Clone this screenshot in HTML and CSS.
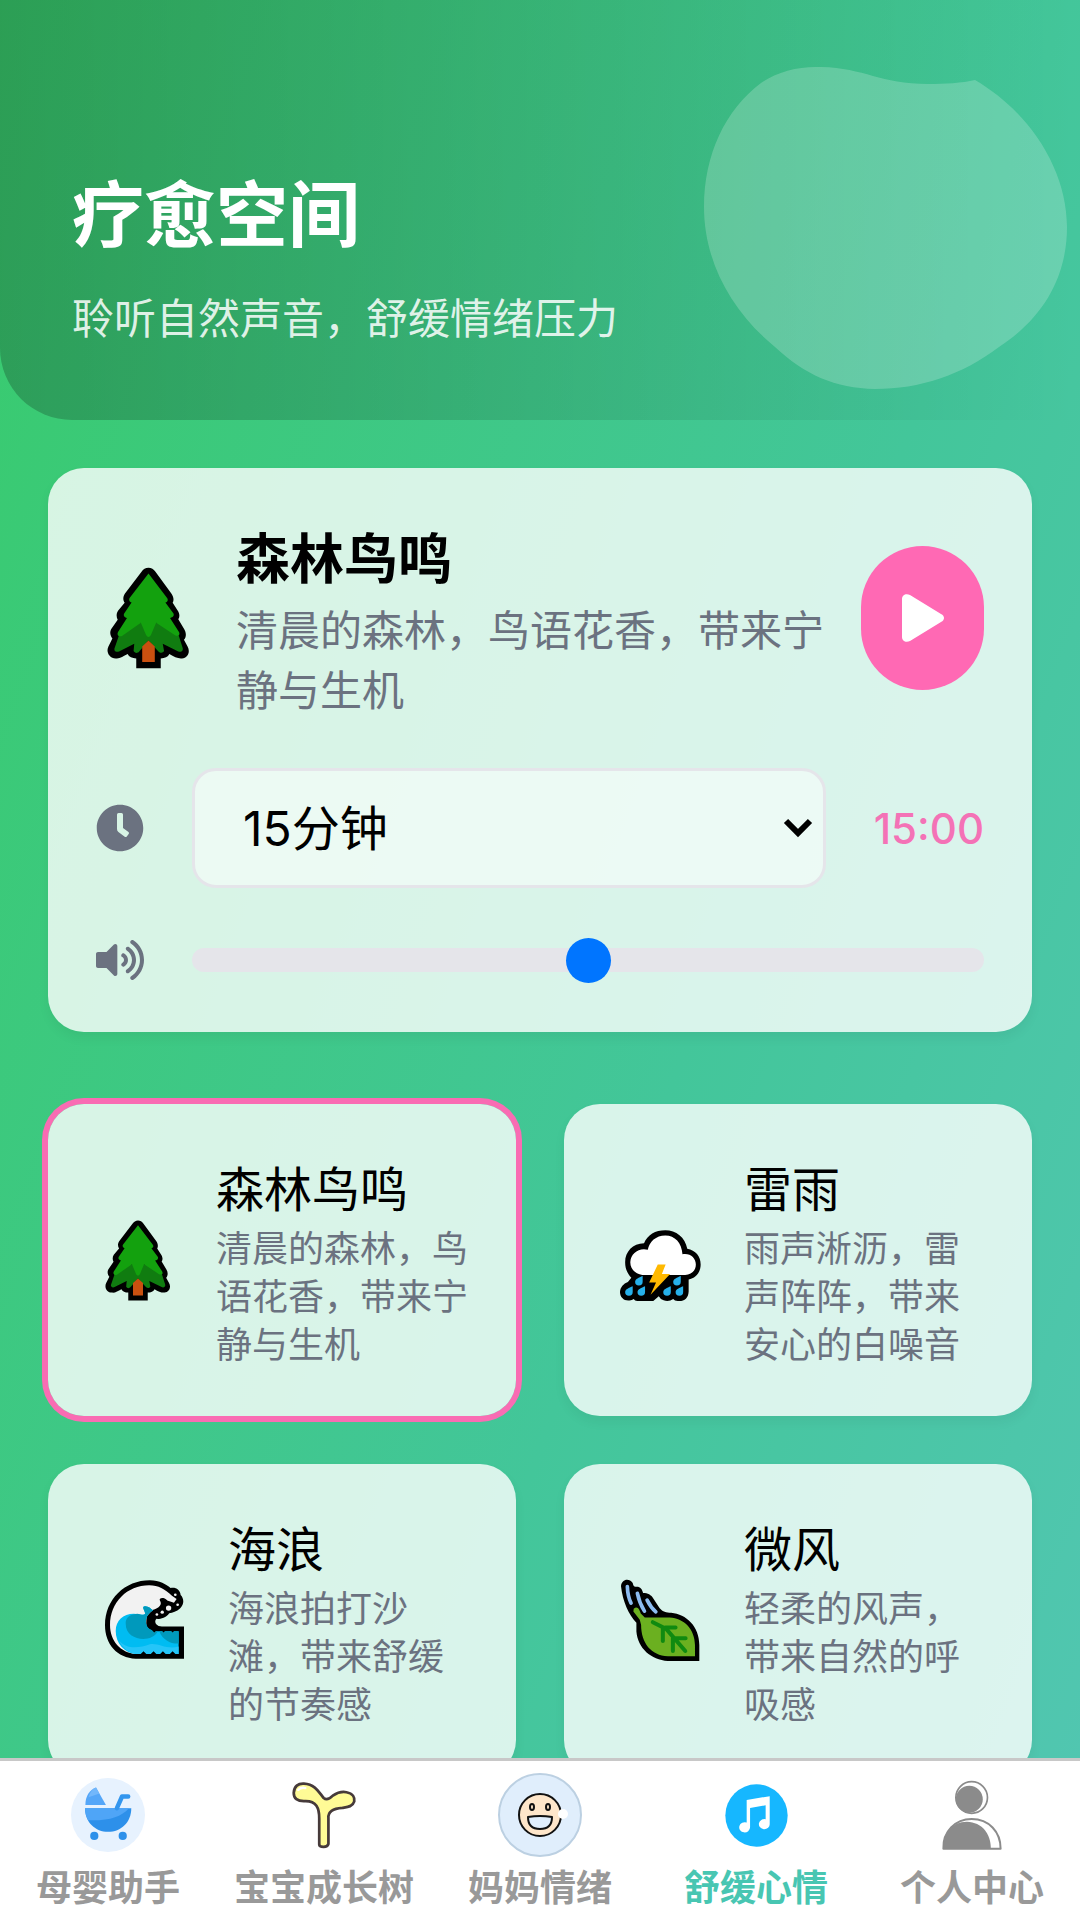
FILE: index.html
```html
<!DOCTYPE html>
<html lang="zh-CN">
<head>
  <meta charset="UTF-8">
  <title>疗愈空间</title>
  <meta name="viewport" content="width=device-width, initial-scale=1.0">
  <link rel="stylesheet" href="styles.css">
</head>
<body>
  <div class="app">
    <main class="page">
      <header class="header">
        <h1>疗愈空间</h1>
        <p>聆听自然声音，舒缓情绪压力</p>
        <svg class="blob" viewBox="0 0 370 340" aria-hidden="true">
          <path d="M4 147C4 95 25 50 61 23C78 11 100 6 121 7C165 8 180 24 228 24C245 24 262 23 275 20C330 52 367 110 367 167C367 215 345 257 299 287C262 315 220 329 175 329C135 328 105 315 75 287C30 250 4 200 4 147Z"/>
        </svg>
      </header>

      <!-- Shared emoji shapes -->
      <svg class="defs" aria-hidden="true">
        <symbol id="tree" viewBox="0 0 250 308">
          <path d="M125 2c-9 0-16 5-21 12L54 80c-6 8-7 20-1 28L33 132c-6 9-5 20-1 27L12 188c-5 10-2 20 4 28L4 240c-8 16 2 36 22 36C38 278 48 270 62 263C66 272 76 276 88 276V306H162V276C174 276 184 272 188 263C202 272 214 277 226 276C244 275 252 255 243 240L232 220C241 210 238 196 233 188L215 158C221 150 218 138 212 130L198 108C203 100 200 88 194 80L146 14C140 6 134 2 125 2Z"/>
          <path fill="#107c10" d="M90 168H160L216 206L228 244c3 9-5 15-13 11L168 232L172 254c-4 7-12 6-17 1L125 222L97 255c-5 6-13 6-17-1L82 232L36 255c-9 4-17-2-13-11L36 206Z"/>
          <path fill="#13a10e" d="M125 20L180 92c6 7 3 14-4 15L200 140c4 7-2 13-10 14L217 196c5 10-4 14-12 10L148 168L133 204c-4 10-12 10-16 0L102 168L45 208c-8 4-17-2-12-12L60 154c-8-1-12-8-8-14L74 107c-7-2-10-9-5-15Z"/>
          <path fill="#ca5010" d="M125 222L144 240V287H106V240Z"/>
        </symbol>
      </svg>

      <section class="player">
        <div class="player-top">
          <span class="player-icon"><svg width="83" height="102" aria-hidden="true"><use href="#tree"/></svg></span>
          <div class="player-text">
            <h2>森林鸟鸣</h2>
            <p>清晨的森林，鸟语花香，带来宁静与生机</p>
          </div>
          <button class="play" type="button" aria-label="播放">
            <svg width="42" height="48" viewBox="0 0 42 48" aria-hidden="true">
              <path fill="#fff" d="M0 5C0 1 4-1 8 1L39 20C43 22 43 26 39 28L8 47C4 49 0 47 0 43Z"/>
            </svg>
          </button>
        </div>

        <div class="player-row">
          <svg class="row-icon" viewBox="0 0 512 512" aria-hidden="true"><path d="M256 8C119 8 8 119 8 256S119 504 256 504 504 393 504 256 393 8 256 8Zm92.490 313l-20 25a16 16 0 0 1-22.490 2.500l-67-49.720a40 40 0 0 1-15-31.230V112a16 16 0 0 1 16-16h32a16 16 0 0 1 16 16V256l58 42.500A16 16 0 0 1 348.490 321Z"/></svg>
          <div class="select-box">
            <select aria-label="播放时长">
              <option>5分钟</option>
              <option selected>15分钟</option>
              <option>30分钟</option>
              <option>60分钟</option>
            </select>
            <svg class="arrow" width="28" height="18" viewBox="0 0 28 18" aria-hidden="true"><path d="M2 2L14 14L26 2" fill="none" stroke="#000" stroke-width="6"/></svg>
          </div>
          <span class="time">15:00</span>
        </div>

        <div class="player-row volume-row">
          <svg class="row-icon" viewBox="0 0 576 512" aria-hidden="true"><path d="M215.030 71.050L126.060 160H24c-13.260 0-24 10.740-24 24v144c0 13.250 10.740 24 24 24h102.060l88.970 88.950c15.030 15.030 40.970 4.470 40.970-16.970V88.020c0-21.460-25.960-31.980-40.970-16.970zm233.320-51.080c-11.170-7.330-26.180-4.240-33.510 6.950-7.340 11.170-4.220 26.180 6.950 33.510 66.270 43.490 105.820 116.600 105.820 195.580 0 78.980-39.550 152.090-105.820 195.580-11.170 7.320-14.290 22.340-6.950 33.500 7.040 10.710 21.930 14.560 33.510 6.950C528.270 439.580 576 351.330 576 256S528.270 72.430 448.350 19.970zM480 256c0-63.530-32.060-121.940-85.770-156.240-11.190-7.140-26.030-3.820-33.120 7.460s-3.780 26.210 7.410 33.360C408.270 165.970 432 209.110 432 256s-23.730 90.020-63.480 115.420c-11.190 7.140-14.500 22.070-7.410 33.360 6.510 10.360 21.120 15.140 33.120 7.460C447.940 377.940 480 319.540 480 256zm-141.770-76.870c-11.580-6.330-26.190-2.160-32.610 9.450-6.390 11.610-2.160 26.200 9.450 32.610C327.980 228.280 336 241.630 336 256c0 14.380-8.020 27.720-20.920 34.810-11.610 6.410-15.840 21-9.450 32.610 6.430 11.660 21.050 15.800 32.610 9.450 28.230-15.550 45.770-45 45.770-76.880s-17.540-61.320-45.780-76.860z"/></svg>
          <input class="volume" type="range" min="0" max="100" value="50" aria-label="音量">
        </div>
      </section>

      <section class="sounds">
        <button class="sound active" type="button">
          <span class="sound-icon narrow"><svg width="66" height="81" aria-hidden="true"><use href="#tree"/></svg></span>
          <span class="sound-text">
            <span class="sound-name">森林鸟鸣</span>
            <span class="sound-desc">清晨的森林，鸟语花香，带来宁静与生机</span>
          </span>
        </button>

        <button class="sound" type="button">
          <span class="sound-icon">
            <svg width="81" height="81" viewBox="235 392 236 236" aria-hidden="true">
              <path d="M250 515C250 485 272 460 305 460C315 435 338 422 367 422C398 422 425 442 431 476C455 480 470 498 470 522C470 545 455 562 435 565V600C434 620 422 630 403 628Q394 627 390 622Q378 631 362 626Q352 622 348 614L332 628H285Q278 627 275 622C255 634 235 622 235 602C236 588 245 578 258 573L268 560C256 548 250 533 250 515Z"/>
              <path fill="#fff" d="M300 552C280 550 265 535 265 515C266 490 290 472 316 479C320 455 340 437 367 437C395 437 415 458 417 492C440 488 456 503 456 522C456 540 442 552 425 552Z"/>
              <g fill="#26b0ea">
                <path id="drop" d="M301 555V572a11 11 0 1 1-22 0C280 563 290 560 301 555Z"/>
                <use href="#drop" x="-29" y="30"/>
                <use href="#drop" x="7" y="30"/>
                <use href="#drop" x="111"/>
                <use href="#drop" x="82" y="30"/>
                <use href="#drop" x="118" y="30"/>
              </g>
              <path fill="#ffb900" d="M345 522H368L357 549H381L324 610L340 574H320Z"/>
            </svg>
          </span>
          <span class="sound-text">
            <span class="sound-name">雷雨</span>
            <span class="sound-desc">雨声淅沥，雷声阵阵，带来安心的白噪音</span>
          </span>
        </button>

        <button class="sound" type="button">
          <span class="sound-icon">
            <svg width="81" height="81" viewBox="23 23 242 242" aria-hidden="true">
              <path d="M160 24C190 24 208 36 222 47C238 44 250 52 252 68C262 78 264 96 250 108C240 118 228 120 218 122C208 136 190 140 180 139C176 142 174 150 180 156Q184 162 196 162H262V258H118C62 256 26 214 26 158C26 80 86 24 160 24Z"/>
              <path fill="#f2f2f2" d="M158 39C186 39 204 50 226 70L240 80L232 91L212 84C200 72 186 78 190 84C198 96 188 106 168 113L150 132L146 244H118C72 240 41 204 41 158C41 90 92 39 158 39Z"/>
              <path fill="#00bcf2" d="M58 175C58 145 80 124 112 124C128 124 140 130 146 124C146 115 136 106 142 102C155 99 160 107 170 114C157 120 149 130 148 148C149 166 160 175 176 176H246V244H118C84 240 58 212 58 175Z"/>
              <path fill="#0099bc" d="M88 155C86 138 98 126 122 124C134 126 142 130 146 124C146 115 136 106 142 102C155 99 160 107 170 114C157 120 149 130 148 148C149 166 160 175 184 176C170 202 130 206 104 188C94 180 88 168 88 155ZM188 176H246V213C222 214 198 202 188 176Z"/>
              <path fill="#25c5f8" d="M68 204C90 232 130 226 160 215C185 210 210 232 246 222V244H118C96 240 78 226 68 204Z"/>
              <path d="M132 245L141 236L150 245ZM162 245L171 236L180 245ZM190 245L199 236L208 245ZM219 245L228 236L237 245ZM164 170L173 180L184 170ZM192 170L201 180L210 170ZM219 170L228 180L237 170Z"/>
              <g fill="#f2f2f2">
                <circle cx="236" cy="67" r="4"/><circle cx="243" cy="97" r="4"/><circle cx="216" cy="107" r="8"/><circle cx="197" cy="119" r="5"/><circle cx="181" cy="126" r="4"/>
              </g>
            </svg>
          </span>
          <span class="sound-text">
            <span class="sound-name">海浪</span>
            <span class="sound-desc">海浪拍打沙滩，带来舒缓的节奏感</span>
          </span>
        </button>

        <button class="sound" type="button">
          <span class="sound-icon">
            <svg width="81" height="81" viewBox="232 386 242 242" aria-hidden="true">
              <path d="M235 405C236 385 258 378 270 395C272 405 275 407 280 406C292 405 298 412 301 425C315 425 325 430 332 442L350 470C360 482 370 484 385 484C430 488 469 525 469 580V628H375C325 625 285 590 281 540V514C258 490 240 450 235 405Z"/>
              <path fill="none" stroke="#8cbcf0" stroke-width="11" stroke-linecap="round" d="M254 406Q255 435 265 455M284 426Q290 455 305 479M313 446Q324 468 339 481"/>
              <path fill="#6bb020" d="M273 472C284 462 290 474 294 486L306 498H380C425 500 456 535 456 580V614H375C325 612 295 575 295 520L291 505L272 480Z"/>
              <path fill="none" stroke="#108a10" stroke-width="12" stroke-linecap="round" d="M330 512L370 532L427 598M360 568V530M398 528H368M390 598V560M428 560H394"/>
            </svg>
          </span>
          <span class="sound-text">
            <span class="sound-name">微风</span>
            <span class="sound-desc">轻柔的风声，带来自然的呼吸感</span>
          </span>
        </button>
      </section>
    </main>

    <nav class="tabbar">
      <a class="tab" href="#assistant">
        <span class="tab-icon">
          <svg width="74" height="74" viewBox="204 89 216 216" aria-hidden="true">
            <circle cx="312" cy="197" r="108" fill="#e7f2fe"/>
            <path fill="#54a6f8" d="M246 168C246 142 258 124 277 117L306 168Z"/>
            <path fill="#72b7fb" d="M255 145C260 130 267 121 277 117L287 134Z"/>
            <path fill="#2d90ea" d="M245 177H380C380 218 350 246 312 246C275 246 245 218 245 177Z"/>
            <path fill="#4fa5f7" d="M245 177H373C350 203 315 214 254 212C248 202 245 190 245 177Z"/>
            <path fill="none" stroke="#3396ee" stroke-width="13" stroke-linecap="round" stroke-linejoin="round" d="M338 177L353 143H371"/>
            <circle cx="272" cy="258" r="12" fill="#2d90ea"/>
            <circle cx="355" cy="258" r="12" fill="#2d90ea"/>
          </svg>
        </span>
        <span>母婴助手</span>
      </a>
      <a class="tab" href="#tree-growth">
        <span class="tab-icon">
          <svg width="68" height="68" viewBox="844 95 200 200" aria-hidden="true">
            <path fill="#fffb96" stroke="#463a3a" stroke-width="8" d="M930 282V205C930 175 922 153 888 154C865 155 855 146 855 130C856 110 868 102 885 103C920 105 930 130 943 145C950 151 960 148 970 138C985 128 1000 126 1010 128C1030 132 1035 145 1033 155C1028 172 1010 172 998 174C970 176 955 185 957 205V280C955 288 948 289 943 289C937 289 930 288 930 282Z"/>
            <path fill="none" stroke="#fff" stroke-width="7" stroke-linecap="round" d="M868 121Q878 112 889 116"/>
          </svg>
        </span>
        <span>宝宝成长树</span>
      </a>
      <a class="tab" href="#mood">
        <span class="tab-icon">
          <svg width="84" height="84" viewBox="0 0 84 84" aria-hidden="true">
            <circle cx="42" cy="42" r="41" fill="#e0eefc" stroke="#bcd0e2" stroke-width="2"/>
            <circle cx="42" cy="42" r="21" fill="#fee6ca" stroke="#111" stroke-width="2"/>
            <circle cx="65" cy="41" r="5" fill="#fff"/>
            <ellipse cx="34" cy="34" rx="2" ry="3" fill="none" stroke="#111" stroke-width="2"/>
            <ellipse cx="50" cy="34" rx="2" ry="3" fill="none" stroke="#111" stroke-width="2"/>
            <path fill="#e0eefc" stroke="#111" stroke-width="2" stroke-linejoin="round" d="M30 44Q42 42 54 44Q54 56 42 56Q30 56 30 44Z"/>
          </svg>
        </span>
        <span>妈妈情绪</span>
      </a>
      <a class="tab current" href="#relax">
        <span class="tab-icon">
          <svg width="63" height="63" viewBox="534 102 186 186" aria-hidden="true">
            <circle cx="627" cy="195" r="92" fill="#16b7ff"/>
            <path fill="#fff" d="M598 149L666 138V220a16 15 0 1 1-12-14V165L608 173V230a16 15 0 1 1-10-14Z"/>
          </svg>
        </span>
        <span>舒缓心情</span>
      </a>
      <a class="tab" href="#me">
        <span class="tab-icon">
          <svg width="70" height="70" viewBox="1151 91 208 208" aria-hidden="true">
            <circle cx="1254" cy="143" r="47" fill="#fff" stroke="#8b8b8b" stroke-width="5"/>
            <circle cx="1247" cy="148" r="40" fill="#8b8b8b"/>
            <path fill="#fff" stroke="#8b8b8b" stroke-width="6" stroke-linejoin="round" d="M1170 295C1168 245 1205 207 1254 207C1305 207 1340 245 1340 295Z"/>
            <path fill="#8b8b8b" d="M1170 296C1168 250 1195 215 1240 215C1285 217 1311 250 1311 296Z"/>
          </svg>
        </span>
        <span>个人中心</span>
      </a>
    </nav>
  </div>
</body>
</html>
```
FILE: styles.css
```css
* {
  box-sizing: border-box;
}

body {
  margin: 0;
  font-family: "Noto Sans CJK SC", "Noto Sans", sans-serif;
  color: #000;
}

h1,
h2,
p {
  margin: 0;
}

button,
select {
  font-family: inherit;
  color: inherit;
}

svg {
  display: block;
  overflow: visible;
}

.defs {
  display: none;
}

.app {
  display: flex;
  flex-direction: column;
  height: 100vh;
  background: linear-gradient(110deg, #38cb6c, #43c69a 60%, #52c6b2);
}

.page {
  flex: 1;
  min-height: 0;
  overflow-y: auto;
  scrollbar-width: none;
}

/* Header */
.header {
  position: relative;
  padding: 156px 72px 74px;
  border-bottom-left-radius: 72px;
  background: linear-gradient(to right, rgba(0, 0, 0, 0.22), rgba(0, 0, 0, 0));
  color: #fff;
}

.header h1 {
  font-size: 72px;
  line-height: 108px;
}

.header p {
  margin-top: 22px;
  font-size: 42px;
  line-height: 60px;
  color: rgba(255, 255, 255, 0.85);
}

.blob {
  position: absolute;
  top: 60px;
  right: 10px;
  width: 370px;
  height: 340px;
  fill: rgba(255, 255, 255, 0.2);
}

/* Player */
.player {
  margin: 48px;
  padding: 48px;
  border-radius: 36px;
  background: rgba(255, 255, 255, 0.8);
  box-shadow: 0 6px 12px rgba(0, 0, 0, 0.05);
}

.player-top {
  display: flex;
  align-items: center;
  gap: 36px;
}

.player-icon {
  flex: 0 0 104px;
  display: flex;
  justify-content: center;
}

.player-text {
  flex: 1;
  padding-bottom: 2px;
}

.player-text h2 {
  margin-bottom: 2px;
  font-size: 54px;
  line-height: 80px;
}

.player-text p {
  font-size: 42px;
  line-height: 60px;
  color: #6b7280;
}

.play {
  flex: 0 0 123px;
  height: 144px;
  display: flex;
  align-items: center;
  justify-content: center;
  padding: 0;
  border: none;
  border-radius: 72px;
  background: #ff69b4;
  cursor: pointer;
}

.player-row {
  display: flex;
  align-items: center;
  gap: 48px;
  margin-top: 48px;
}

.row-icon {
  flex: none;
  width: 48px;
  height: 48px;
  fill: #6b7280;
}

.select-box {
  flex: 1;
  display: grid;
  align-items: center;
}

.select-box select {
  grid-area: 1 / 1;
  width: 100%;
  height: 120px;
  padding: 0 48px;
  border: 3px solid #e5e5ea;
  border-radius: 24px;
  background: rgba(255, 255, 255, 0.5);
  font-family: Inter, "Noto Sans CJK SC", sans-serif;
  font-size: 48px;
  appearance: none;
}

.arrow {
  grid-area: 1 / 1;
  justify-self: end;
  margin-right: 14px;
  pointer-events: none;
}

.time {
  font-family: Inter, sans-serif;
  font-size: 42px;
  font-weight: 500;
  color: #f472b6;
}

.volume {
  flex: 1;
  height: 24px;
  margin: 0;
  border-radius: 12px;
  background: #e5e5ea;
  appearance: none;
}

.volume::-webkit-slider-thumb {
  appearance: none;
  width: 45px;
  height: 45px;
  border-radius: 50%;
  background: #0075ff;
}

/* Sound list */
.sounds {
  display: grid;
  grid-template-columns: 1fr 1fr;
  gap: 48px;
  margin: 72px 48px 48px;
}

.sound {
  display: flex;
  align-items: center;
  gap: 36px;
  padding: 48px;
  border: none;
  border-radius: 36px;
  background: rgba(255, 255, 255, 0.8);
  box-shadow: 0 6px 12px rgba(0, 0, 0, 0.05);
  text-align: left;
  cursor: pointer;
}

.sound.active {
  box-shadow: 0 0 0 6px #f96cb3;
}

.sound-icon {
  flex: 0 0 96px;
  display: flex;
  justify-content: center;
}

.sound-icon.narrow {
  flex-basis: 84px;
}

.sound-text {
  flex: 1;
  padding-bottom: 2px;
}

.sound-name,
.sound-desc {
  display: block;
}

.sound-name {
  margin-bottom: 2px;
  font-size: 48px;
  line-height: 68px;
}

.sound-desc {
  font-size: 36px;
  line-height: 48px;
  color: #6b7280;
}

/* Tab bar */
.tabbar {
  display: grid;
  grid-template-columns: repeat(5, 1fr);
  padding: 12px 0 11px;
  border-top: 3px solid #c8c8c8;
  background: #fff;
}

.tab {
  display: flex;
  flex-direction: column;
  align-items: center;
  gap: 4px;
  font-size: 36px;
  font-weight: bold;
  line-height: 48px;
  color: #999;
  text-decoration: none;
  white-space: nowrap;
}

.tab-icon {
  height: 84px;
  display: flex;
  align-items: center;
}

.current {
  color: #48c6b2;
}
```
